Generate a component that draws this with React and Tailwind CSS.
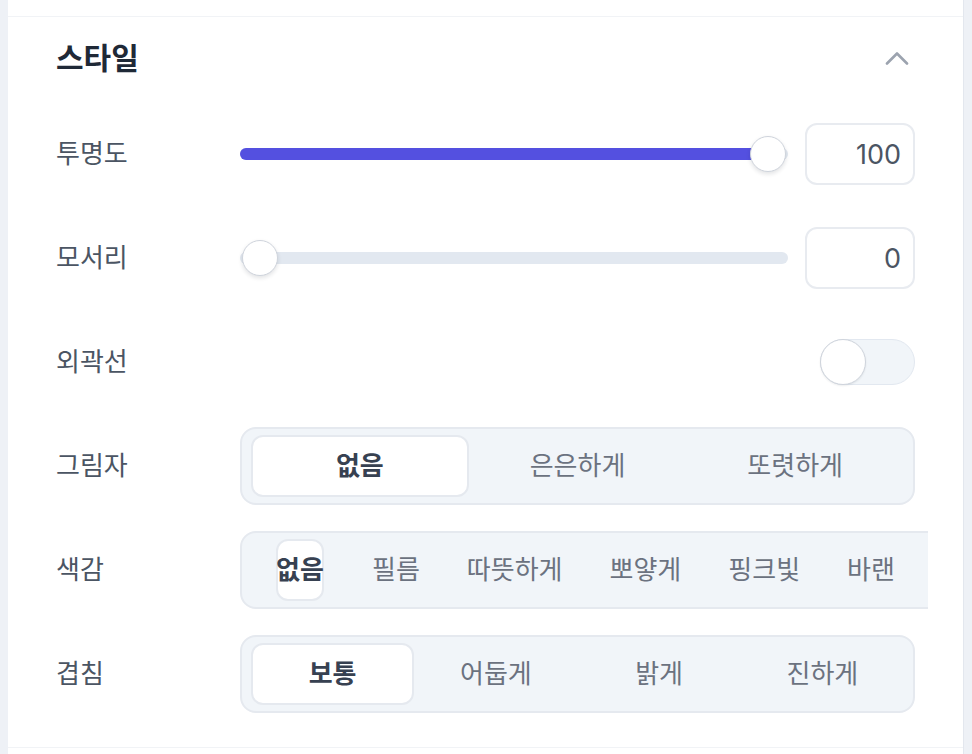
import React from 'react';

const FONT = { fontFamily: '"Inter", "Noto Sans CJK KR", "Noto Sans", sans-serif' };

function Row({ label, children }) {
  return (
    <div className="flex items-center h-[78px]">
      <div className="w-[184px] shrink-0 text-[26px] leading-none text-[#4b5563]">{label}</div>
      <div className="flex-1 flex items-center min-w-0">{children}</div>
    </div>
  );
}

function Slider({ value }) {
  const full = value >= 100;
  return (
    <div className="flex items-center gap-[17px] w-full">
      <div className="relative h-3 w-[548px] rounded-full bg-[#e2e8f0]">
        {full && <div className="absolute inset-y-0 left-0 w-[530px] rounded-full bg-[#5450e0]" />}
        <div
          className={`absolute top-1/2 -translate-y-1/2 size-9 rounded-full bg-white border border-[#cfd4dc] shadow-[0_2px_4px_rgba(15,23,42,0.12)] ${
            full ? 'left-[510px]' : 'left-[2px]'
          }`}
        />
      </div>
      <div className="w-[110px] h-[62px] rounded-xl border-2 border-[#e8ebf0] flex items-center justify-end pr-[12px] text-[27px] leading-none text-[#4b5563]">
        {value}
      </div>
    </div>
  );
}

function Segmented({ options, active, cols }) {
  return (
    <div className={`w-full h-[78px] rounded-2xl bg-[#f1f5f9] border-2 border-[#e5e9ef] px-[9px] py-[6px] grid ${cols}`}>
      {options.map((opt, i) => (
        <div
          key={opt}
          className={`flex items-center justify-center rounded-xl text-[26px] leading-none ${
            i === active
              ? 'bg-white border-2 border-[#e5e9ef] font-bold text-[#374151]'
              : 'text-[#6b7280]'
          }`}
        >
          {opt}
        </div>
      ))}
    </div>
  );
}

export default function App() {
  const tones = ['필름', '따뜻하게', '뽀얗게', '핑크빛', '바랜'];

  return (
    <div className="w-[972px] h-[754px] bg-[#eef1f6] overflow-hidden" style={FONT}>
      <div className="ml-2 w-[956px] h-full bg-white border-r border-[#e3e7ee]">
        <div className="h-4" />
        <section className="border-t border-[#f1f3f6] border-b border-[#e5e7eb] px-12 pb-[34px]">
          {/* Header */}
          <div className="h-[82px] flex items-center justify-between">
            <h2 className="text-[30px] leading-none font-bold text-[#1f2937]">스타일</h2>
            <svg width="24" height="14" viewBox="0 0 24 14" fill="none" className="mr-[6px]">
              <polyline points="2,12.5 12,2.5 22,12.5" stroke="#9ca3af" strokeWidth="2.6" strokeLinecap="round" strokeLinejoin="round" />
            </svg>
          </div>

          <div className="mt-4 flex flex-col gap-[26px]">
            <Row label="투명도">
              <Slider value={100} />
            </Row>
            <Row label="모서리">
              <Slider value={0} />
            </Row>
            <Row label="외곽선">
              <div className="ml-auto relative w-[95px] h-[46px] rounded-full bg-[#f1f5f9] border border-[#e2e8f0]">
                <div className="absolute -left-px -top-px size-[46px] rounded-full bg-white border border-[#cfd4dc] shadow-[0_1px_2px_rgba(15,23,42,0.08)]" />
              </div>
            </Row>
            <Row label="그림자">
              <Segmented options={['없음', '은은하게', '또렷하게']} active={0} cols="grid-cols-3" />
            </Row>
            <Row label="색감">
              <div className="w-[688px] shrink-0 overflow-hidden">
                <div className="w-[760px] h-[78px] rounded-2xl bg-[#f1f5f9] border-2 border-[#e5e9ef] flex items-center pl-[34px] gap-[47px]">
                  <div className="w-[48px] h-[62px] mr-px shrink-0 flex items-center justify-center rounded-xl bg-white border-2 border-[#e5e9ef] text-[26px] leading-none font-bold text-[#374151] whitespace-nowrap">
                    없음
                  </div>
                  {tones.map((t) => (
                    <div key={t} className="shrink-0 text-[26px] leading-none whitespace-nowrap text-[#6b7280]">
                      {t}
                    </div>
                  ))}
                </div>
              </div>
            </Row>
            <Row label="겹침">
              <Segmented options={['보통', '어둡게', '밝게', '진하게']} active={0} cols="grid-cols-4" />
            </Row>
          </div>
        </section>
      </div>
    </div>
  );
}
